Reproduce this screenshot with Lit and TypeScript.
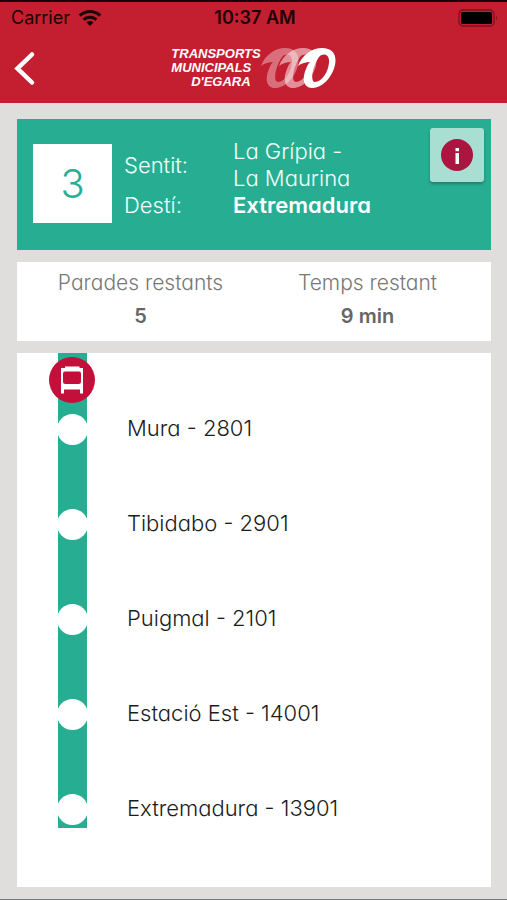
import { LitElement, html, css, svg } from "lit";
import { customElement, property } from "lit/decorators.js";

@customElement("status-bar")
class StatusBar extends LitElement {
  static styles = css`
    :host {
      display: grid;
      grid-template-columns: 1fr auto 1fr;
      align-items: center;
      height: 32px;
      padding: 0 8px 0 11px;
      font: 18px/24px Inter, "Liberation Sans", sans-serif;
      color: #1c0206;
    }
    .carrier { display: flex; align-items: center; gap: 8px; }
    .time { font-weight: 600; }
    .battery { justify-self: end; }
    svg { display: block; }
  `;
  render() {
    return html`
      <span class="carrier">Carrier
        <svg width="24" height="18" viewBox="0 0 24 18" aria-label="Wi-Fi">
          <g fill="none" stroke="currentColor" stroke-width="3">
            <path d="M1.8 6.6a14.5 14.5 0 0 1 20.4 0" />
            <path d="M5.6 10.8a9 9 0 0 1 12.8 0" />
          </g>
          <path d="M12 17l-3.6-3.7a5 5 0 0 1 7.2 0z" fill="currentColor" />
        </svg>
      </span>
      <span class="time">10:37 AM</span>
      <svg class="battery" width="41" height="18" viewBox="0 0 41 18" aria-label="Battery">
        <rect x="1" y="1" width="35" height="16" rx="4" fill="none" stroke="#7d1020" stroke-width="1.3" />
        <rect x="3" y="3" width="31" height="12" rx="1.5" fill="#000" />
        <path d="M38 6.5q2 2.5 0 5z" fill="#7d1020" />
      </svg>
    `;
  }
}

@customElement("app-header")
class AppHeader extends LitElement {
  static styles = css`
    :host {
      display: grid;
      grid-template-columns: 1fr auto 1fr;
      align-items: center;
      height: 68px;
      padding: 0 8px;
      color: #fff;
    }
    .back {
      width: 32px;
      height: 44px;
      padding: 0;
      border: 0;
      background: none;
      color: inherit;
    }
    .brand { display: flex; align-items: center; }
    .name {
      font: italic bold 13px/14px "Liberation Sans", Arial, sans-serif;
      display: grid;
    }
    .last { text-align: right; padding-right: 10px; }
    svg { display: block; }
  `;
  render() {
    const ring = svg`
      <path fill-rule="evenodd" d="M0 19C4 8 14 1 24 1C35 1 39 8 37 18C34 31 24 41 14 41C5 41 4 31 8 22C9 19 10 17 12 15C8 15 4 16 0 19zM21 10C14 20 12 35 17 35C23 35 30 26 31 16C32 8 26 5 21 10z" />`;
    return html`
      <button class="back" aria-label="Enrere">
        <svg width="32" height="44" viewBox="0 0 32 44">
          <path d="M24 8.5L9.500 22.500l14.500 14" fill="none" stroke="currentColor" stroke-width="4.500" stroke-linecap="round" />
        </svg>
      </button>
      <div class="brand">
        <div class="name">
          <span>TRANSPORTS</span><span>MUNICIPALS</span><span class="last">D'EGARA</span>
        </div>
        <svg width="75" height="44" viewBox="0 0 75 44" fill="#fff">
          <g transform="translate(0 1)" opacity=".36">${ring}</g>
          <g transform="translate(18 1)" opacity=".5">${ring}</g>
          <g transform="translate(37 1)">${ring}</g>
        </svg>
      </div>
    `;
  }
}

@customElement("line-card")
class LineCard extends LitElement {
  static styles = css`
    :host {
      display: flex;
      align-items: flex-start;
      height: 131px;
      box-sizing: border-box;
      background: #27ae92;
      color: #f2fffc;
      font-size: 22px;
      line-height: 27px;
    }
    .number {
      display: grid;
      place-items: center;
      width: 79px;
      height: 79px;
      margin: 25px 12px 0 16px;
      background: #fff;
      color: #27ae92;
      font-size: 40px;
      font-weight: 300;
    }
    dl {
      flex: 1;
      display: grid;
      grid-template-columns: 109px 1fr;
      align-items: center;
      margin: 19px 0 0;
    }
    dd { margin: 0; }
    .dest { font-weight: 600; color: #fff; }
    .info {
      width: 54px;
      height: 54px;
      margin: 9px 7px 0 0;
      padding: 0;
      border: 0;
      border-radius: 3px;
      background: #a9dfd3;
      box-shadow: 0 2px 3px #0004;
    }
    svg { display: block; margin: auto; }
  `;
  render() {
    return html`
      <div class="number">3</div>
      <dl>
        <dt>Sentit:</dt>
        <dd>La Grípia -<br />La Maurina</dd>
        <dt>Destí:</dt>
        <dd class="dest">Extremadura</dd>
      </dl>
      <button class="info" aria-label="Informació">
        <svg width="32" height="32" viewBox="0 0 32 32">
          <circle cx="16" cy="16" r="16" fill="#ac1540" />
          <rect x="14.500" y="9" width="3.500" height="3.200" fill="#fff" />
          <rect x="14.500" y="14" width="3.500" height="11" fill="#fff" />
        </svg>
      </button>
    `;
  }
}

@customElement("trip-summary")
class TripSummary extends LitElement {
  static styles = css`
    :host {
      display: block;
      background: #fff;
      color: #777;
      font-size: 21px;
    }
    dl {
      display: grid;
      grid-template-columns: 1fr 1fr;
      margin: 0;
      padding: 4px 10px 8px;
      text-align: center;
    }
    dt { line-height: 34px; }
    dd { margin: 0; line-height: 33px; font-size: 20px; font-weight: 600; color: #666; }
  `;
  render() {
    return html`
      <dl>
        <div><dt>Parades restants</dt><dd>5</dd></div>
        <div><dt>Temps restant</dt><dd>9 min</dd></div>
      </dl>
    `;
  }
}

@customElement("stop-list")
class StopList extends LitElement {
  @property({ attribute: false }) stops: string[] = [];

  static styles = css`
    :host {
      display: block;
      position: relative;
      background: #fff;
      color: #1c1c1c;
      font-size: 22px;
      line-height: 30px;
    }
    ol { list-style: none; margin: 0; padding: 0 0 0 41px; }
    li { display: flex; align-items: flex-end; gap: 40px; height: 95px; }
    .track {
      display: flex;
      flex-direction: column;
      justify-content: flex-end;
      align-items: center;
      width: 29px;
      height: 100%;
      background: #27ae92;
    }
    .dot {
      width: 31px;
      height: 31px;
      margin-bottom: 3px;
      border-radius: 50%;
      background: #fff;
    }
    .name { padding-bottom: 5px; }
    .bus { position: absolute; left: 32px; top: 4px; }
  `;
  render() {
    return html`
      <ol>
        ${this.stops.map(
          (stop) => html`<li><span class="track"><span class="dot"></span></span><span class="name">${stop}</span></li>`
        )}
      </ol>
      <svg class="bus" width="46" height="46" viewBox="0 0 46 46" aria-label="Bus">
        <circle cx="23" cy="23" r="23" fill="#c3103a" />
        <path fill="#fff" fill-rule="evenodd" d="M16 9.500h14.500v1.500h3.500v25.500h-3v-4H15v4h-3V11h4zM16 14.500q-2 0-2 2v8q0 2.500 2.500 2.500h13q2.500 0 2.500-2.500v-8q0-2-2-2z" />
      </svg>
    `;
  }
}

@customElement("app-root")
class AppRoot extends LitElement {
  static styles = css`
    :host {
      display: flex;
      flex-direction: column;
      box-sizing: border-box;
      min-height: 100vh;
      background: #dfdedc;
      border-top: 2px solid #1a0004;
      border-bottom: 1px solid #777;
      font-family: Inter, "Liberation Sans", sans-serif;
      font-weight: 300;
      font-feature-settings: "cv11";
    }
    header { background: #c41e31; padding-bottom: 1px; }
    main {
      flex: 1;
      display: flex;
      flex-direction: column;
      gap: 12px;
      padding: 16px 16px 12px 17px;
    }
    stop-list { flex: 1; }
  `;
  private stops = [
    "Mura - 2801",
    "Tibidabo - 2901",
    "Puigmal - 2101",
    "Estació Est - 14001",
    "Extremadura - 13901",
  ];
  render() {
    return html`
      <header>
        <status-bar></status-bar>
        <app-header></app-header>
      </header>
      <main>
        <line-card></line-card>
        <trip-summary></trip-summary>
        <stop-list .stops=${this.stops}></stop-list>
      </main>
    `;
  }
}
